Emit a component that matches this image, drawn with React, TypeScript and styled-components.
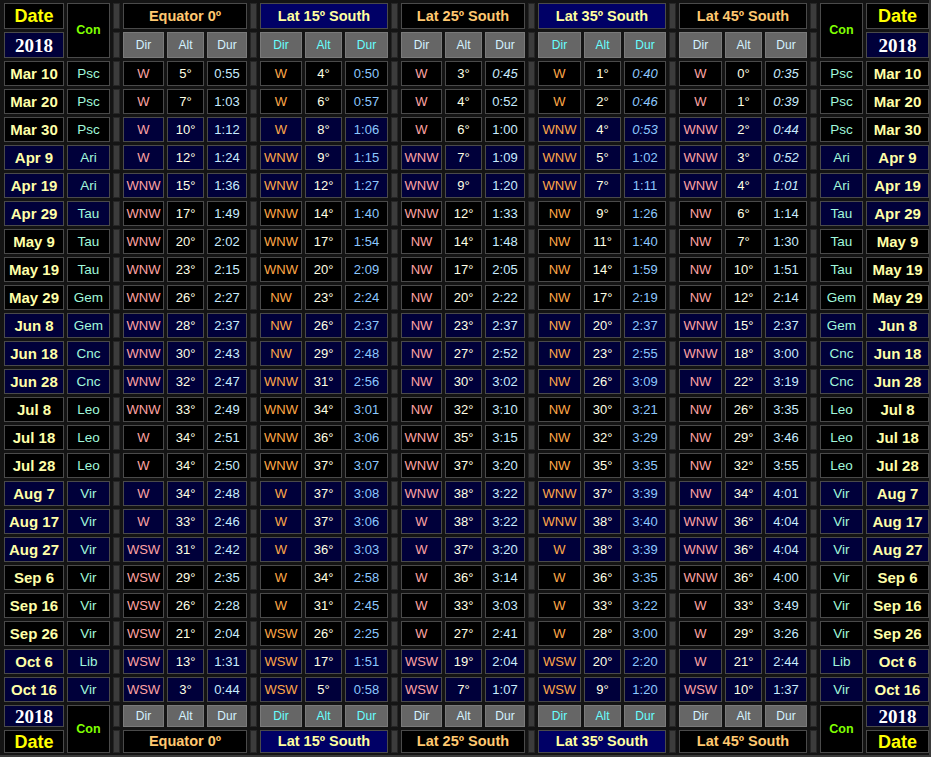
import React from "react";
import styled, { createGlobalStyle, css } from "styled-components";

const GlobalStyle = createGlobalStyle`
  html, body {
    margin: 0;
    padding: 0;
    background: #141414;
  }
  body {
    font-family: "Liberation Sans", Arial, sans-serif;
  }
`;

// one row of the table: date, constellation, then 5 latitudes of [dir, alt, dur]
// "i" at the end of dur means the value is printed in italics
// blocks: which of the 5 latitude blocks get the dark blue background (n = navy)
type Row = {
  date: string;
  con: string;
  navy: boolean;
  cells: string[][];
  blocks: string;
};

const raw: [string, string, string, string][] = [
  ["Mar 10", "Psc", "bbbbb", "W 5 0:55|W 4 0:50|W 3 0:45i|W 1 0:40i|W 0 0:35i"],
  ["Mar 20", "Psc", "bbbbb", "W 7 1:03|W 6 0:57|W 4 0:52|W 2 0:46i|W 1 0:39i"],
  ["Mar 30", "Psc", "nnbnn", "W 10 1:12|W 8 1:06|W 6 1:00|WNW 4 0:53i|WNW 2 0:44i"],
  ["Apr 9", "Ari", "nnnnn", "W 12 1:24|WNW 9 1:15|WNW 7 1:09|WNW 5 1:02|WNW 3 0:52i"],
  ["Apr 19", "Ari", "nnnnn", "WNW 15 1:36|WNW 12 1:27|WNW 9 1:20|WNW 7 1:11|WNW 4 1:01i"],
  ["Apr 29", "Tau", "bbbbb", "WNW 17 1:49|WNW 14 1:40|WNW 12 1:33|NW 9 1:26|NW 6 1:14"],
  ["May 9", "Tau", "bbbbb", "WNW 20 2:02|WNW 17 1:54|NW 14 1:48|NW 11 1:40|NW 7 1:30"],
  ["May 19", "Tau", "bbbbb", "WNW 23 2:15|WNW 20 2:09|NW 17 2:05|NW 14 1:59|NW 10 1:51"],
  ["May 29", "Gem", "bbbbb", "WNW 26 2:27|NW 23 2:24|NW 20 2:22|NW 17 2:19|NW 12 2:14"],
  ["Jun 8", "Gem", "nnnnn", "WNW 28 2:37|NW 26 2:37|NW 23 2:37|NW 20 2:37|WNW 15 2:37"],
  ["Jun 18", "Cnc", "nnnnn", "WNW 30 2:43|NW 29 2:48|NW 27 2:52|NW 23 2:55|WNW 18 3:00"],
  ["Jun 28", "Cnc", "nnnnn", "WNW 32 2:47|WNW 31 2:56|NW 30 3:02|NW 26 3:09|NW 22 3:19"],
  ["Jul 8", "Leo", "bbbbb", "WNW 33 2:49|WNW 34 3:01|NW 32 3:10|NW 30 3:21|NW 26 3:35"],
  ["Jul 18", "Leo", "bbbbb", "W 34 2:51|WNW 36 3:06|WNW 35 3:15|NW 32 3:29|NW 29 3:46"],
  ["Jul 28", "Leo", "bbbbb", "W 34 2:50|WNW 37 3:07|WNW 37 3:20|NW 35 3:35|NW 32 3:55"],
  ["Aug 7", "Vir", "nnnnn", "W 34 2:48|W 37 3:08|WNW 38 3:22|WNW 37 3:39|NW 34 4:01"],
  ["Aug 17", "Vir", "nnnnn", "W 33 2:46|W 37 3:06|W 38 3:22|WNW 38 3:40|WNW 36 4:04"],
  ["Aug 27", "Vir", "nnnnn", "WSW 31 2:42|W 36 3:03|W 37 3:20|W 38 3:39|WNW 36 4:04"],
  ["Sep 6", "Vir", "bbbbb", "WSW 29 2:35|W 34 2:58|W 36 3:14|W 36 3:35|WNW 36 4:00"],
  ["Sep 16", "Vir", "bbbbb", "WSW 26 2:28|W 31 2:45|W 33 3:03|W 33 3:22|W 33 3:49"],
  ["Sep 26", "Vir", "bbbbb", "WSW 21 2:04|WSW 26 2:25|W 27 2:41|W 28 3:00|W 29 3:26"],
  ["Oct 6", "Lib", "nnnnn", "WSW 13 1:31|WSW 17 1:51|WSW 19 2:04|WSW 20 2:20|W 21 2:44"],
  ["Oct 16", "Vir", "nnnnn", "WSW 3 0:44|WSW 5 0:58|WSW 7 1:07|WSW 9 1:20|WSW 10 1:37"],
];

const navyDates = ["Apr", "Jun", "Aug", "Oct"];

const rows: Row[] = raw.map(([date, con, blocks, data]) => ({
  date,
  con,
  blocks,
  navy: navyDates.includes(date.slice(0, 3)),
  cells: data.split("|").map((b) => b.split(" ")),
}));

const latitudes = ["Equator 0º", "Lat 15º South", "Lat 25º South", "Lat 35º South", "Lat 45º South"];

const NAVY = "#00003a";

const Page = styled.div`
  box-sizing: border-box;
  width: 931px;
  height: 757px;
  padding: 3px 0 0 4px;
  border-right: 2px solid #3a3a3a;
  border-bottom: 2px solid #3a3a3a;
  display: grid;
  grid-template-columns:
    60px 43px 7px
    41px 37px 40px 7px
    42px 37px 43px 7px
    41px 37px 40px 7px
    43px 37px 42px 7px
    43px 37px 42px 7px
    43px 63px;
  grid-template-rows: 26px 26px repeat(23, 25px) 22px 23px;
  gap: 3px;
  overflow: hidden;
`;

const Box = styled.div`
  box-sizing: border-box;
  border: 1px solid #4a4a4a;
  display: flex;
  align-items: center;
  justify-content: center;
  white-space: nowrap;
  line-height: 1;
`;

const DateHead = styled(Box)`
  background: #000;
  color: #ffff00;
  font-weight: bold;
  font-size: 18px;
`;

const Year = styled(Box)`
  background: ${NAVY};
  color: #fff;
  font-family: "Liberation Serif", "Times New Roman", serif;
  font-weight: bold;
  font-size: 19px;
`;

const ConHead = styled(Box)`
  grid-row: span 2;
  background: #000;
  color: #80ff00;
  font-weight: bold;
  font-size: 12.5px;
`;

const Sep = styled.div`
  box-sizing: border-box;
  background: #3c3c3c;
  border: 1px solid #262626;
`;

const Title = styled(Box)<{ $alt: boolean }>`
  grid-column: span 3;
  font-weight: bold;
  font-size: 14.5px;
  background: ${(p) => (p.$alt ? "#000066" : "#000")};
  color: ${(p) => (p.$alt ? "#ffffa0" : "#ffc870")};
`;

const SubHead = styled(Box)<{ $alt: boolean }>`
  background: #666;
  border-color: #7a7a7a;
  font-size: 12px;
  color: ${(p) => (p.$alt ? "#66ffff" : "#d4f2ff")};
`;

const DateCell = styled(Box)<{ $navy: boolean }>`
  background: ${(p) => (p.$navy ? NAVY : "#000")};
  color: #ffffa8;
  font-weight: bold;
  font-size: 15px;
`;

const ConCell = styled(Box)<{ $navy: boolean }>`
  background: ${(p) => (p.$navy ? NAVY : "#000")};
  color: #a0f8dc;
  font-size: 13.5px;
`;

const Data = styled(Box)<{ $navy: boolean; $kind: "dir" | "alt" | "dur"; $alt: boolean; $italic?: boolean }>`
  background: ${(p) => (p.$navy ? NAVY : "#000")};
  font-size: 13px;
  ${(p) => p.$italic && css`font-style: italic;`}
  color: ${(p) =>
    p.$kind === "dir"
      ? p.$alt
        ? "#ffa848"
        : "#ffa4a4"
      : p.$kind === "alt"
      ? "#ffffe4"
      : p.$alt
      ? "#8cc8ff"
      : "#c8ecff"};
`;

const TitleRow = () => (
  <>
    {latitudes.map((l, i) => (
      <React.Fragment key={l}>
        <Sep />
        <Title $alt={i % 2 === 1}>{l}</Title>
      </React.Fragment>
    ))}
    <Sep />
  </>
);

const SubHeadRow = () => (
  <>
    {latitudes.map((l, i) => (
      <React.Fragment key={l}>
        <Sep />
        <SubHead $alt={i % 2 === 1}>Dir</SubHead>
        <SubHead $alt={i % 2 === 1}>Alt</SubHead>
        <SubHead $alt={i % 2 === 1}>Dur</SubHead>
      </React.Fragment>
    ))}
    <Sep />
  </>
);

const DataRow = ({ row }: { row: Row }) => (
  <>
    <DateCell $navy={row.navy}>{row.date}</DateCell>
    <ConCell $navy={row.navy}>{row.con}</ConCell>
    {row.cells.map(([dir, alt, dur], i) => {
      const navy = row.blocks[i] === "n";
      const alternate = i % 2 === 1;
      const italic = dur.endsWith("i");
      return (
        <React.Fragment key={i}>
          <Sep />
          <Data $navy={navy} $kind="dir" $alt={alternate}>{dir}</Data>
          <Data $navy={navy} $kind="alt" $alt={alternate}>{alt}°</Data>
          <Data $navy={navy} $kind="dur" $alt={alternate} $italic={italic}>
            {italic ? dur.slice(0, -1) : dur}
          </Data>
        </React.Fragment>
      );
    })}
    <Sep />
    <ConCell $navy={row.navy}>{row.con}</ConCell>
    <DateCell $navy={row.navy}>{row.date}</DateCell>
  </>
);

export default function App() {
  return (
    <>
      <GlobalStyle />
      <Page>
        {/* header */}
        <DateHead>Date</DateHead>
        <ConHead>Con</ConHead>
        <TitleRow />
        <ConHead>Con</ConHead>
        <DateHead>Date</DateHead>

        <Year>2018</Year>
        <SubHeadRow />
        <Year>2018</Year>

        {rows.map((r) => (
          <DataRow key={r.date} row={r} />
        ))}

        {/* footer, mirrored */}
        <Year>2018</Year>
        <ConHead>Con</ConHead>
        <SubHeadRow />
        <ConHead>Con</ConHead>
        <Year>2018</Year>

        <DateHead>Date</DateHead>
        <TitleRow />
        <DateHead>Date</DateHead>
      </Page>
    </>
  );
}
